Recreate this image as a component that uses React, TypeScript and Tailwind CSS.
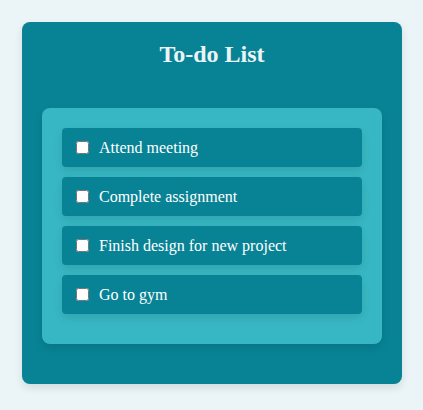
const tasks: string[] = [
  "Attend meeting",
  "Complete assignment",
  "Finish design for new project",
  "Go to gym",
];

function TaskItem({ title }: { title: string }) {
  return (
    <li>
      <label className="flex items-center gap-2.5 rounded-sm bg-[#088395] py-2.5 pr-2.5 pl-3.5 leading-[19px] text-white shadow-[0_4px_8px_rgba(0,0,0,0.1)]">
        <input type="checkbox" className="size-[13px] shrink-0" />
        <span>{title}</span>
      </label>
    </li>
  );
}

export default function App() {
  return (
    <div className="min-h-screen bg-[#ebf4f6] p-[22px] pr-[21px] font-['Liberation_Serif','Times_New_Roman',serif] text-base">
      <main className="rounded-lg bg-[#088395] px-5 pt-[18px] pb-10 shadow-[0_4px_8px_rgba(0,0,0,0.1)]">
        <h1 className="text-center text-2xl leading-7 font-bold text-[#ebf4f6]">To-do List</h1>
        <ul className="mt-10 flex flex-col gap-2.5 rounded-lg bg-[#37b7c3] px-5 pt-5 pb-[30px] shadow-[0_4px_8px_rgba(0,0,0,0.1)]">
          {tasks.map((title) => (
            <TaskItem key={title} title={title} />
          ))}
        </ul>
      </main>
    </div>
  );
}
